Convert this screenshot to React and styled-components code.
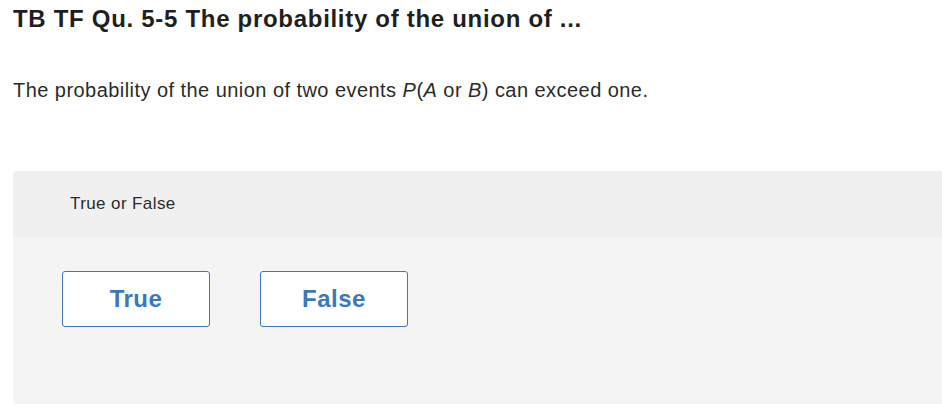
import React from "react";
import styled, { createGlobalStyle } from "styled-components";

const GlobalStyle = createGlobalStyle`
  html, body {
    margin: 0;
    padding: 0;
    background: #ffffff;
    font-family: "Liberation Sans", Arial, sans-serif;
  }
`;

const Page = styled.div`
  padding: 0 0 0 13px;
`;

const Title = styled.h1`
  margin: 0;
  padding-top: 6px;
  font-size: 24px;
  line-height: 26px;
  font-weight: 700;
  letter-spacing: 0.7px;
  color: #1f1f1f;
`;

const Prompt = styled.p`
  margin: 0;
  padding-top: 46px;
  font-size: 20px;
  line-height: 24px;
  letter-spacing: 0.45px;
  color: #2b2b2b;
`;

const Panel = styled.div`
  margin-top: 69px;
  border-radius: 4px 0 0 4px;
  overflow: hidden;
  background: #f4f4f4;
`;

const PanelHeader = styled.div`
  height: 66px;
  display: flex;
  align-items: center;
  padding-left: 57px;
  background: #f0f0f0;
  font-size: 17px;
  letter-spacing: 0.4px;
  color: #2b2b2b;
`;

const Choices = styled.div`
  height: 167px;
  display: flex;
  align-items: flex-start;
  gap: 50px;
  padding: 34px 0 0 49px;
  box-sizing: border-box;
`;

const ChoiceButton = styled.button`
  width: 148px;
  height: 56px;
  padding: 0;
  border: 1px solid #3b78c0;
  border-radius: 3px;
  background: #ffffff;
  color: #3b78c0;
  font-family: "Liberation Sans", Arial, sans-serif;
  font-size: 24px;
  font-weight: 700;
  letter-spacing: 0.5px;
  cursor: pointer;
`;

const Italic = styled.i`
  font-style: italic;
`;

export default function App() {
  return (
    <>
      <GlobalStyle />
      <Page>
        <Title>TB TF Qu. 5-5 The probability of the union of ...</Title>
        <Prompt>
          The probability of the union of two events <Italic>P</Italic>(
          <Italic>A</Italic> or <Italic>B</Italic>) can exceed one.
        </Prompt>
        <Panel>
          <PanelHeader>True or False</PanelHeader>
          <Choices>
            <ChoiceButton>True</ChoiceButton>
            <ChoiceButton>False</ChoiceButton>
          </Choices>
        </Panel>
      </Page>
    </>
  );
}
